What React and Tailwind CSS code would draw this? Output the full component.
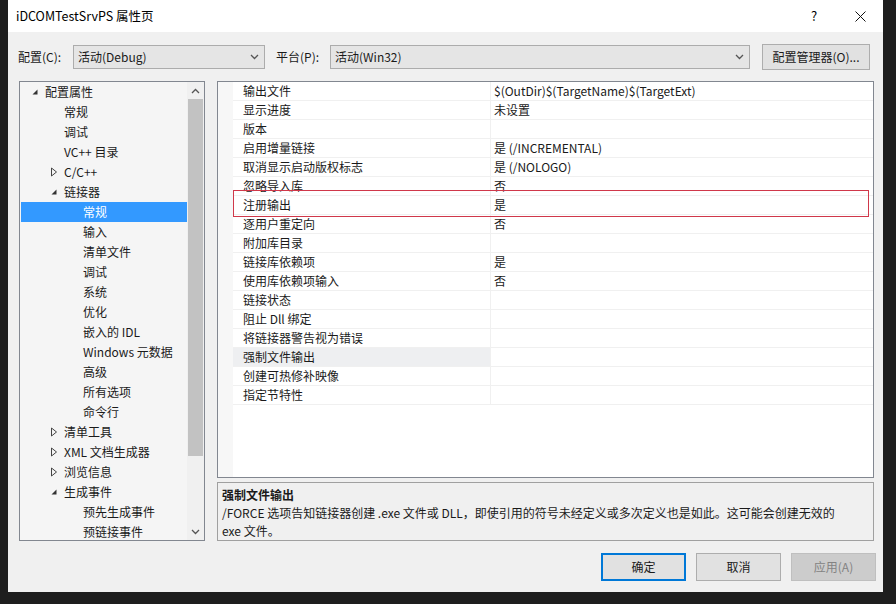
import React from 'react';

const font = { fontFamily: '"Noto Sans CJK SC", "Noto Sans", sans-serif' };

const treeItems = [
  { level: 0, label: '配置属性', arrow: 'open' },
  { level: 1, label: '常规' },
  { level: 1, label: '调试' },
  { level: 1, label: 'VC++ 目录' },
  { level: 1, label: 'C/C++', arrow: 'closed' },
  { level: 1, label: '链接器', arrow: 'open' },
  { level: 2, label: '常规', selected: true },
  { level: 2, label: '输入' },
  { level: 2, label: '清单文件' },
  { level: 2, label: '调试' },
  { level: 2, label: '系统' },
  { level: 2, label: '优化' },
  { level: 2, label: '嵌入的 IDL' },
  { level: 2, label: 'Windows 元数据' },
  { level: 2, label: '高级' },
  { level: 2, label: '所有选项' },
  { level: 2, label: '命令行' },
  { level: 1, label: '清单工具', arrow: 'closed' },
  { level: 1, label: 'XML 文档生成器', arrow: 'closed' },
  { level: 1, label: '浏览信息', arrow: 'closed' },
  { level: 1, label: '生成事件', arrow: 'open' },
  { level: 2, label: '预先生成事件' },
  { level: 2, label: '预链接事件' },
];

const props = [
  ['输出文件', '$(OutDir)$(TargetName)$(TargetExt)'],
  ['显示进度', '未设置'],
  ['版本', ''],
  ['启用增量链接', '是 (/INCREMENTAL)'],
  ['取消显示启动版权标志', '是 (/NOLOGO)'],
  ['忽略导入库', '否'],
  ['注册输出', '是'],
  ['逐用户重定向', '否'],
  ['附加库目录', ''],
  ['链接库依赖项', '是'],
  ['使用库依赖项输入', '否'],
  ['链接状态', ''],
  ['阻止 Dll 绑定', ''],
  ['将链接器警告视为错误', ''],
  ['强制文件输出', '', true],
  ['创建可热修补映像', ''],
  ['指定节特性', ''],
];

const Arrow = ({ type }) =>
  type === 'open' ? (
    <svg width="8" height="8" viewBox="0 0 8 8">
      <path d="M6.5 1.5 L6.5 6.5 L1.5 6.5 Z" fill="#333" />
    </svg>
  ) : (
    <svg width="8" height="10" viewBox="0 0 8 10">
      <path d="M1.5 1 L6.5 5 L1.5 9 Z" fill="none" stroke="#444" strokeWidth="1" />
    </svg>
  );

const Chevron = ({ up }) => (
  <svg width="9" height="6" viewBox="0 0 9 6">
    <path d={up ? 'M1 5 L4.5 1.5 L8 5' : 'M1 1 L4.5 4.5 L8 1'} fill="none" stroke="#555" strokeWidth="1.3" />
  </svg>
);

export default function App() {
  return (
    <div className="w-[896px] h-[604px] bg-[#1e1e1e] pl-[8px] overflow-hidden" style={font}>
      <div className="w-[875px] h-[592px] bg-[#f0f0f0] flex flex-col text-[12px] text-[#1a1a1a]">
        {/* title bar */}
        <div className="h-[32px] bg-white flex items-center shrink-0">
          <div className="pl-[8px] text-[12.5px] text-black flex-1">iDCOMTestSrvPS 属性页</div>
          <div className="w-[46px] h-[32px] flex items-center justify-center text-[13px] text-black">?</div>
          <div className="w-[46px] h-[32px] flex items-center justify-center">
            <svg width="11" height="11" viewBox="0 0 11 11">
              <path d="M0.5 0.5 L10.5 10.5 M10.5 0.5 L0.5 10.5" stroke="#111" strokeWidth="1" />
            </svg>
          </div>
        </div>

        {/* config row */}
        <div className="mt-[12px] h-[26px] flex items-center pl-[10px] shrink-0">
          <div className="w-[55px]">配置(C):</div>
          <div className="w-[192px] h-[24px] bg-[#e5e5e5] border border-[#acacac] flex items-center justify-between pl-[4px] pr-[5px]">
            <span>活动(Debug)</span>
            <Chevron />
          </div>
          <div className="ml-[11px] w-[54px]">平台(P):</div>
          <div className="w-[420px] h-[24px] bg-[#e5e5e5] border border-[#acacac] flex items-center justify-between pl-[4px] pr-[5px]">
            <span>活动(Win32)</span>
            <Chevron />
          </div>
          <div className="ml-[12px] w-[108px] h-[26px] bg-[#e1e1e1] border border-[#adadad] flex items-center justify-center">
            配置管理器(O)...
          </div>
        </div>

        {/* main */}
        <div className="mt-[11px] flex pl-[11px] h-[460px] shrink-0">
          {/* tree */}
          <div className="w-[186px] h-[460px] border border-[#828790] bg-[#f5f5f5] flex">
            <div className="w-[167px] pt-0 overflow-hidden">
              {treeItems.map((it, i) => (
                <div
                  key={i}
                  className={`h-[20px] flex items-center ${it.selected ? 'bg-[#3399ff] text-white ml-[1px]' : ''}`}
                >
                  <div
                    className={`flex items-center justify-center shrink-0 ${
                      it.level === 0 ? 'w-[25px] pl-[4px]' : it.level === 1 ? 'w-[44px] pl-[24px]' : it.selected ? 'w-[62px]' : 'w-[63px]'
                    }`}
                  >
                    {it.arrow && <Arrow type={it.arrow} />}
                  </div>
                  <span className={it.level === 2 ? '' : ''}>{it.label}</span>
                </div>
              ))}
            </div>
            <div className="w-[17px] bg-[#f0f0f0] flex flex-col items-center">
              <div className="h-[17px] flex items-center justify-center">
                <Chevron up />
              </div>
              <div className="w-[15px] h-[357px] bg-[#c2c2c2]" />
              <div className="flex-1" />
              <div className="h-[17px] flex items-center justify-center">
                <Chevron />
              </div>
            </div>
          </div>

          {/* right */}
          <div className="ml-[12px] w-[657px] flex flex-col">
            <div className="h-[397px] border border-[#828790] bg-white flex relative">
              <div className="w-[15px] bg-[#f7f7f7]" />
              <div className="flex-1">
                {props.map(([name, value, hl], i) => (
                  <div key={i} className="h-[19px] flex border-b border-[#f0f0f0]">
                    <div className={`w-[258px] pl-[10px] flex items-center border-r border-[#f0f0f0] ${hl ? 'bg-[#eeeff1]' : ''}`}>
                      {name}
                    </div>
                    <div className="flex-1 pl-[3px] flex items-center">{value}</div>
                  </div>
                ))}
              </div>
              <div className="absolute left-[15px] top-[108px] w-[636px] h-[27px] border border-[#d0384a]" />
            </div>
            <div className="mt-[4px] h-[59px] border border-[#a0a0a0] bg-[#f0f0f0] px-[4px] pt-[3px] leading-[18px]">
              <div className="font-bold">强制文件输出</div>
              <div>/FORCE 选项告知链接器创建 .exe 文件或 DLL，即使引用的符号未经定义或多次定义也是如此。这可能会创建无效的</div>
              <div>exe 文件。</div>
            </div>
          </div>
        </div>

        {/* buttons */}
        <div className="mt-[12px] flex justify-end pr-[7px] gap-[10px] shrink-0">
          <div className="w-[85px] h-[28px] bg-[#e1e1e1] border-2 border-[#0078d7] flex items-center justify-center">确定</div>
          <div className="w-[85px] h-[28px] bg-[#e1e1e1] border border-[#adadad] flex items-center justify-center">取消</div>
          <div className="w-[85px] h-[28px] bg-[#cccccc] border border-[#bfbfbf] flex items-center justify-center text-[#838383]">应用(A)</div>
        </div>
      </div>
    </div>
  );
}
